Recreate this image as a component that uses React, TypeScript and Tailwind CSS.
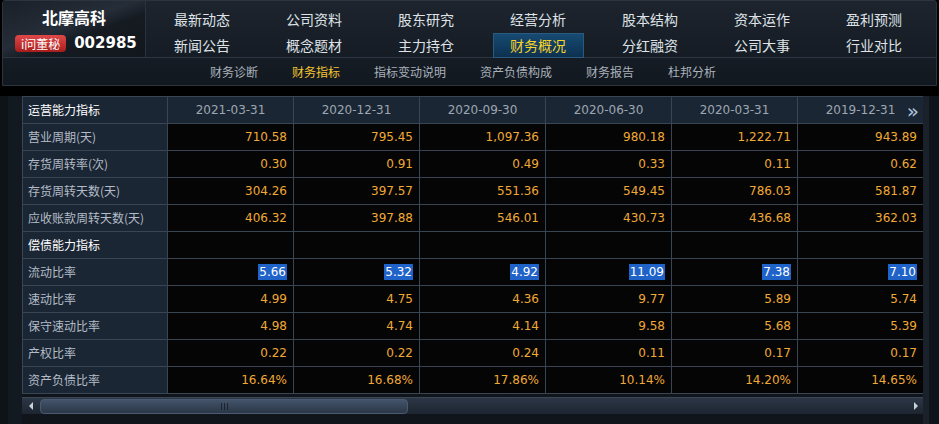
import React from "react";

const navRow1 = ["最新动态", "公司资料", "股东研究", "经营分析", "股本结构", "资本运作", "盈利预测"];
const navRow2 = ["新闻公告", "概念题材", "主力持仓", "财务概况", "分红融资", "公司大事", "行业对比"];
const subNav = ["财务诊断", "财务指标", "指标变动说明", "资产负债构成", "财务报告", "杜邦分析"];
const dates = ["2021-03-31", "2020-12-31", "2020-09-30", "2020-06-30", "2020-03-31", "2019-12-31"];

type Row = { label: string; values?: string[]; section?: boolean; selected?: boolean };

const rows: Row[] = [
  { label: "营业周期(天)", values: ["710.58", "795.45", "1,097.36", "980.18", "1,222.71", "943.89"] },
  { label: "存货周转率(次)", values: ["0.30", "0.91", "0.49", "0.33", "0.11", "0.62"] },
  { label: "存货周转天数(天)", values: ["304.26", "397.57", "551.36", "549.45", "786.03", "581.87"] },
  { label: "应收账款周转天数(天)", values: ["406.32", "397.88", "546.01", "430.73", "436.68", "362.03"] },
  { label: "偿债能力指标", section: true },
  { label: "流动比率", values: ["5.66", "5.32", "4.92", "11.09", "7.38", "7.10"], selected: true },
  { label: "速动比率", values: ["4.99", "4.75", "4.36", "9.77", "5.89", "5.74"] },
  { label: "保守速动比率", values: ["4.98", "4.74", "4.14", "9.58", "5.68", "5.39"] },
  { label: "产权比率", values: ["0.22", "0.22", "0.24", "0.11", "0.17", "0.17"] },
  { label: "资产负债比率", values: ["16.64%", "16.68%", "17.86%", "10.14%", "14.20%", "14.65%"] },
];

const cjk = "font-['Noto_Sans_CJK_SC',sans-serif]";
const num = "font-['DejaVu_Sans','Noto_Sans_CJK_SC',sans-serif]";

function NavItem({ text, active }: { text: string; active?: boolean }) {
  return (
    <div className="flex items-center justify-center">
      {active ? (
        <div className="w-[91px] h-[25px] flex items-center justify-center bg-gradient-to-b from-[#174a72] to-[#0c3150] border border-[#2b5a80] text-[#f6d22a] text-[14px]">
          {text}
        </div>
      ) : (
        <span className="text-[#dfe3e8] text-[14px]">{text}</span>
      )}
    </div>
  );
}

export default function App() {
  return (
    <div className={`w-[939px] h-[424px] bg-black overflow-hidden ${cjk}`}>
      {/* top panel */}
      <div className="mx-[2px] border border-[#2c343e] rounded-t-[3px] bg-gradient-to-b from-[#1d242d] to-[#121820]">
        <div className="flex h-[57px] border-b border-[#2e3641]">
          <div className="w-[143px] flex flex-col items-center pt-[5px] border-r border-[#2a323c] bg-[linear-gradient(160deg,#1a2029_0%,#252d38_45%,#161b22_60%,#12171d_100%)]">
            <div className="text-white font-bold text-[16px] leading-[22px]">北摩高科</div>
            <div className="flex items-center gap-[8px] mt-[4px] ml-[4px]">
              <div className="h-[17px] w-[51px] text-center rounded-[4px] bg-gradient-to-b from-[#e04848] to-[#a81c1c] text-white text-[12px] leading-[17px]">
                i问董秘
              </div>
              <span className="text-white font-bold text-[15px] font-['DejaVu_Sans',sans-serif]">002985</span>
            </div>
          </div>
          <div className="w-[784px] grid grid-cols-7 grid-rows-[26px_26px] pt-[5px]">
            {navRow1.map((t) => (
              <NavItem key={t} text={t} />
            ))}
            {navRow2.map((t) => (
              <NavItem key={t} text={t} active={t === "财务概况"} />
            ))}
          </div>
        </div>
        <div className="h-[27px] flex items-center pl-[207px] gap-[34px] text-[12px]">
          {subNav.map((t) => (
            <span key={t} className={t === "财务指标" ? "text-[#f4c430]" : "text-[#a9b1ba]"}>
              {t}
            </span>
          ))}
        </div>
      </div>

      <div className="h-[10px]" />

      {/* body */}
      <div className="flex h-[329px]">
        <div className="w-[22px] bg-[#131920] flex">
          <div className="w-[8px] bg-[#0e1318]" />
        </div>
        <div className="w-[901px] bg-[#10151c] flex flex-col">
          <table className="border-collapse table-fixed w-[901px] text-[12px]">
            <colgroup>
              <col className="w-[145px]" />
              {dates.map((d) => (
                <col key={d} className="w-[126px]" />
              ))}
            </colgroup>
            <tbody>
              <tr className="h-[27px]">
                <td className="border border-[#3a4553] bg-[#1b2634] text-white pl-[5px]">运营能力指标</td>
                {dates.map((d, i) => (
                  <td
                    key={d}
                    className={`border border-[#3a4553] bg-[#1b2634] text-[#9ea7b1] text-center ${num}`}
                  >
                    <div className="relative">
                      {d}
                      {i === dates.length - 1 && (
                        <span className="absolute right-[4px] top-[-5px] text-[#a9c2dc] text-[20px] font-['DejaVu_Sans',sans-serif]">»</span>
                      )}
                    </div>
                  </td>
                ))}
              </tr>
              {rows.map((r) => (
                <tr key={r.label} className="h-[27px]">
                  <td
                    className={`border border-[#3a4553] bg-[#1b2634] pl-[5px] ${
                      r.section ? "text-white" : "text-[#b3bcc6]"
                    }`}
                  >
                    {r.label}
                  </td>
                  {dates.map((d, i) => (
                    <td
                      key={d}
                      className={`border border-[#3a4553] bg-[#050505] text-right pr-[6px] ${num}`}
                    >
                      {r.values &&
                        (r.selected ? (
                          <span className="bg-[#1f63c9] text-white px-[1px] py-[1px]">{r.values[i]}</span>
                        ) : (
                          <span className="text-[#f1a935]">{r.values[i]}</span>
                        ))}
                    </td>
                  ))}
                </tr>
              ))}
            </tbody>
          </table>
          {/* scrollbar */}
          <div className="mt-[3px] h-[17px] flex items-center bg-gradient-to-b from-[#2c3746] to-[#1c2530] border-t border-[#3b4757]">
            <div className="w-[18px] flex items-center justify-center">
              <div className="w-0 h-0 border-y-[4px] border-y-transparent border-r-[4px] border-r-[#c8d0d8]" />
            </div>
            <div className="w-[368px] h-[15px] rounded-[4px] bg-gradient-to-b from-[#43536a] to-[#2b3747] border border-[#4a5a70] flex items-center justify-center gap-[2px]">
              <div className="w-[1px] h-[7px] bg-[#1a222c]" />
              <div className="w-[1px] h-[7px] bg-[#1a222c]" />
              <div className="w-[1px] h-[7px] bg-[#1a222c]" />
            </div>
            <div className="flex-1" />
            <div className="w-[14px] flex items-center justify-center">
              <div className="w-0 h-0 border-y-[4px] border-y-transparent border-l-[4px] border-l-[#c8d0d8]" />
            </div>
          </div>
        </div>
        <div className="w-[16px] bg-[#0f141b] flex">
          <div className="w-[6px] bg-[#1a212a]" />
        </div>
      </div>
    </div>
  );
}
